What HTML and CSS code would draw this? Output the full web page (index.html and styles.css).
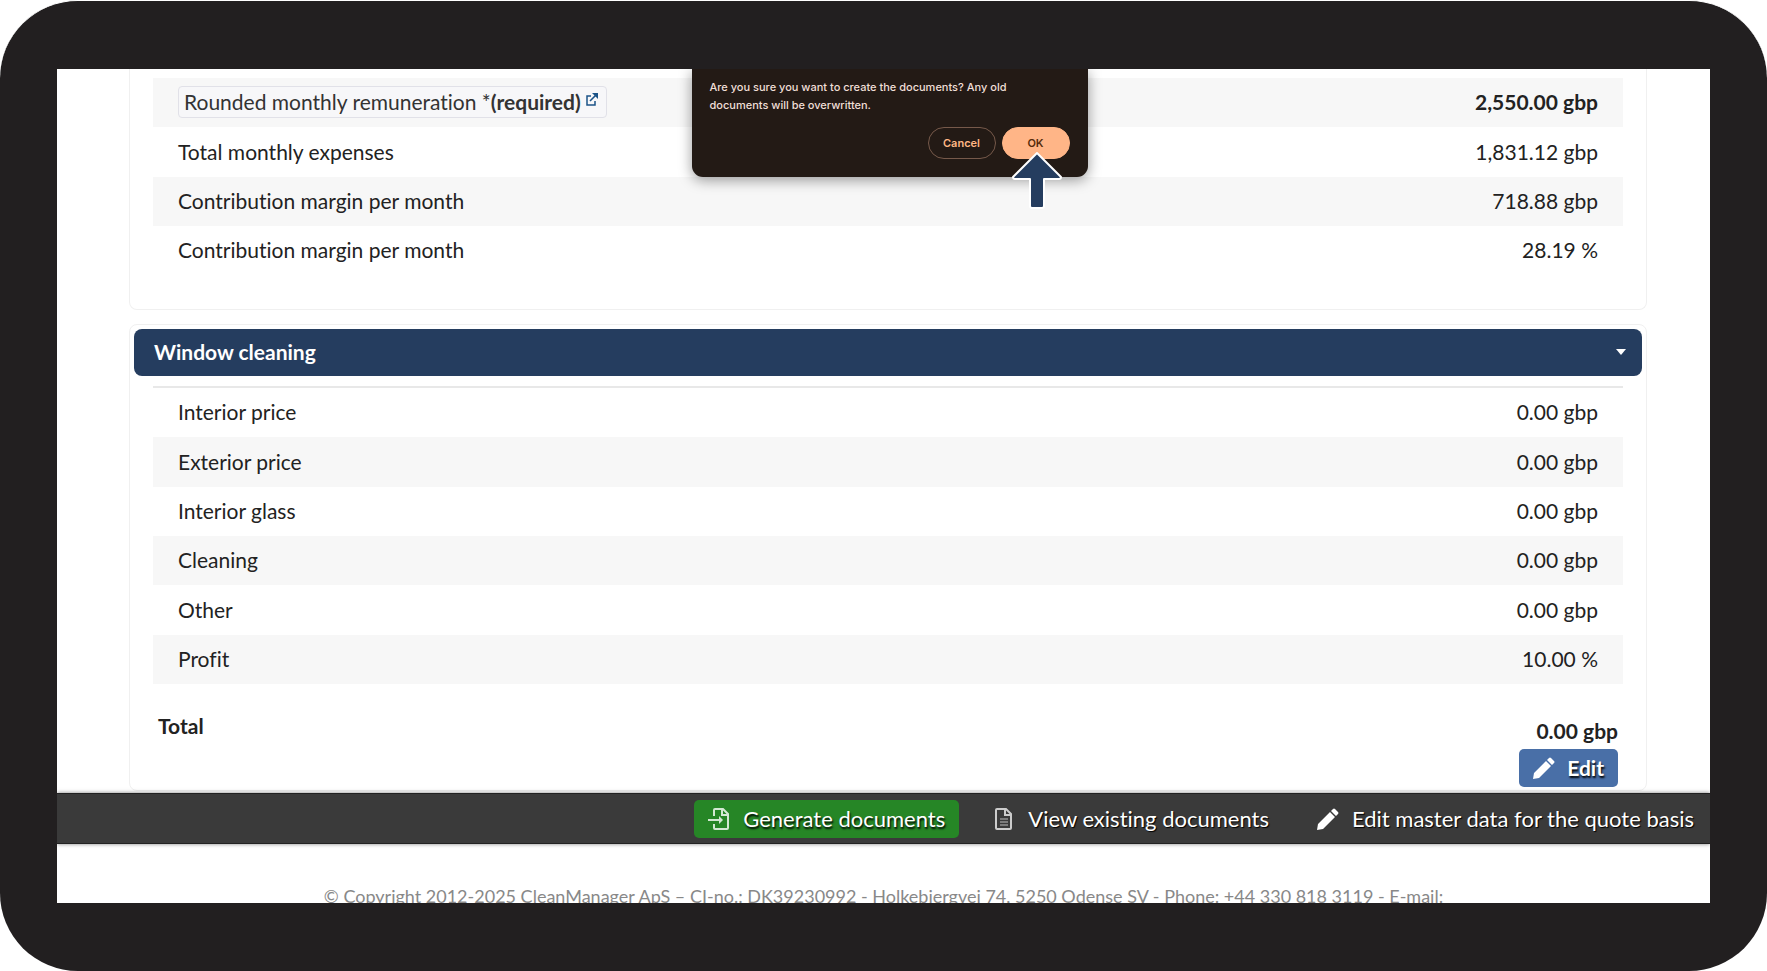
FILE: index.html
```html
<!DOCTYPE html>
<html lang="en">
<head>
    <meta charset="UTF-8">
    <meta name="viewport" content="width=device-width, initial-scale=1.0">
    <title>CleanManager - Quote basis</title>
    <link rel="stylesheet" href="styles.css">
</head>
<body>
    <div class="device">
        <div class="screen">
            <main class="content">
                <section class="panel panel-monthly">
                    <table class="rows rows-monthly">
                        <tbody>
                            <tr>
                                <th scope="row">
                                    <a class="field-link" href="#">Rounded monthly remuneration *<strong>(required)</strong>
                                        <svg class="icon-external" viewBox="0 0 12 14" aria-hidden="true">
                                            <path d="M5 4H1v9h8V9" fill="none" stroke="currentColor" stroke-width="1.5"/>
                                            <path d="M4 9l6-6" fill="none" stroke="currentColor" stroke-width="1.6"/>
                                            <path d="M6 1h6v6z" fill="currentColor"/>
                                        </svg>
                                    </a>
                                </th>
                                <td><strong>2,550.00 gbp</strong></td>
                            </tr>
                            <tr><th scope="row">Total monthly expenses</th><td>1,831.12 gbp</td></tr>
                            <tr><th scope="row">Contribution margin per month</th><td>718.88 gbp</td></tr>
                            <tr><th scope="row">Contribution margin per month</th><td>28.19 %</td></tr>
                        </tbody>
                    </table>
                </section>

                <section class="panel">
                    <button type="button" class="panel-header">
                        Window cleaning
                        <span class="caret"></span>
                    </button>
                    <table class="rows rows-window">
                        <tbody>
                            <tr><th scope="row">Interior price</th><td>0.00 gbp</td></tr>
                            <tr><th scope="row">Exterior price</th><td>0.00 gbp</td></tr>
                            <tr><th scope="row">Interior glass</th><td>0.00 gbp</td></tr>
                            <tr><th scope="row">Cleaning</th><td>0.00 gbp</td></tr>
                            <tr><th scope="row">Other</th><td>0.00 gbp</td></tr>
                            <tr><th scope="row">Profit</th><td>10.00 %</td></tr>
                        </tbody>
                    </table>
                    <div class="total">
                        <strong class="total-label">Total</strong>
                        <div class="total-value">
                            <strong>0.00 gbp</strong>
                            <button type="button" class="btn btn-edit">
                                <svg class="icon" viewBox="0 0 22 22" aria-hidden="true">
                                    <path d="M0 22l1-6L13 4l5 5L6 21zM14 3l2-2q1-1 2 0l3 3q1 1 0 2l-2 2z" fill="#fff"/>
                                </svg>
                                Edit
                            </button>
                        </div>
                    </div>
                </section>
            </main>

            <nav class="toolbar">
                <button type="button" class="btn btn-generate">
                    <svg class="icon" viewBox="0 0 22 22" aria-hidden="true">
                        <path d="M6 8V2q0-1 1-1h8l5 5v14q0 1-1 1H7q-1 0-1-1v-4M14 1v6h6" fill="none" stroke="#d3e8d3" stroke-width="2"/>
                        <path d="M0 12h12" stroke="#d3e8d3" stroke-width="2"/>
                        <path d="M11 8l4 4-4 4z" fill="#d3e8d3"/>
                    </svg>
                    Generate documents
                </button>
                <button type="button" class="btn">
                    <svg class="icon" viewBox="0 0 22 22" aria-hidden="true">
                        <path d="M4 1h9l5 5v14q0 1-1 1H4q-1 0-1-1V2q0-1 1-1zM12 1v6h6" fill="none" stroke="#ccc" stroke-width="2"/>
                        <path d="M7 11h8M7 14h8M7 17h8" stroke="#bbb" stroke-width="1.2"/>
                    </svg>
                    View existing documents
                </button>
                <button type="button" class="btn">
                    <svg class="icon" viewBox="0 0 22 22" aria-hidden="true">
                        <path d="M0 22l1-6L13 4l5 5L6 21zM14 3l2-2q1-1 2 0l3 3q1 1 0 2l-2 2z" fill="#fff"/>
                    </svg>
                    Edit master data for the quote basis
                </button>
            </nav>

            <footer class="footer">© Copyright 2012-2025 CleanManager ApS – CI-no.: DK39230992 - Holkebjergvej 74, 5250 Odense SV - Phone: +44 330 818 3119 - E-mail:</footer>

            <div class="dialog" role="alertdialog" aria-describedby="dialogText">
                <p id="dialogText">Are you sure you want to create the documents? Any old documents will be overwritten.</p>
                <div class="dialog-actions">
                    <button type="button" class="dialog-btn">Cancel</button>
                    <button type="button" class="dialog-btn dialog-btn-ok">OK</button>
                </div>
                <svg class="pointer" viewBox="0 0 52 58" aria-hidden="true">
                    <path d="M26 2L50 26Q50 28 48 28H33V55Q33 57 31 57H21Q19 57 19 55V28H4Q2 28 2 26Z" fill="#253d5f" stroke="#fff" stroke-width="2" stroke-linejoin="round"/>
                </svg>
            </div>
        </div>
    </div>
</body>
</html>
```

FILE: styles.css
```css
* {
    margin: 0;
    padding: 0;
    box-sizing: border-box;
}

body {
    font-family: Lato, "Open Sans", sans-serif;
    font-size: 21px;
    font-variant-ligatures: none;
    line-height: 28px;
    color: #222;
    background: #fff;
}

button {
    font: inherit;
    font-variant-ligatures: none;
    border: none;
    cursor: pointer;
}

/* Tablet frame */
.device {
    height: 100vh;
    padding: 68px 57px;
    background: #221f20;
    border-top: 1px solid #fff;
    border-radius: 78px;
}

.screen {
    position: relative;
    height: 100%;
    overflow: hidden;
    background: #fff;
}

.content {
    padding: 0 63px 0 72px;
}

/* Panels */
.panel {
    padding: 4px 4px 3px;
    margin-bottom: 2px;
    border: 1px solid #f0f0f0;
    border-radius: 8px;
}

.panel-monthly {
    padding-top: 9px;
    padding-bottom: 34px;
    margin-bottom: 14px;
    border-top: none;
    border-radius: 0 0 8px 8px;
}

.panel-header {
    display: flex;
    align-items: center;
    justify-content: space-between;
    width: 100%;
    height: 47px;
    padding: 0 16px 1px 20px;
    margin-bottom: 10px;
    color: #fff;
    font-weight: 700;
    background: #253d5f;
    border-radius: 8px;
}

.caret {
    border: 5px solid transparent;
    border-top: 6px solid #fff;
    border-bottom: none;
}

/* Price rows */
.rows {
    width: calc(100% - 38px);
    margin: 0 19px;
    border-spacing: 0;
}

.rows-window {
    border-top: 2px solid #e8e8e8;
}

.rows th,
.rows td {
    height: 49px;
    padding: 0 25px 1px;
    font-weight: 400;
    text-align: left;
}

.rows tr:nth-child(3n + 2) th {
    height: 50px;
}

.rows td {
    text-align: right;
}

.rows-monthly tr:nth-child(odd),
.rows-window tr:nth-child(even) {
    background: #f7f7f7;
}

.field-link {
    display: inline-block;
    padding: 1px 8px 1px 5px;
    color: #333;
    text-decoration: none;
    background: #f7f7f9;
    border: 1px solid #e1e1e8;
    border-radius: 4px;
    vertical-align: middle;
}

.icon-external {
    width: 12px;
    height: 14px;
    color: #1c5488;
    vertical-align: 4px;
}

.total {
    display: flex;
    justify-content: space-between;
    padding: 28px 24px 0;
}

.total-value {
    display: flex;
    flex-direction: column;
    align-items: flex-end;
    gap: 4px;
    padding-top: 5px;
}

/* Buttons */
.btn {
    display: flex;
    align-items: center;
    gap: 13px;
    height: 38px;
    padding: 0 14px;
    color: #fff;
    font-size: 22px;
    text-shadow: 1px 1px 1px #000;
    background: none;
    border-radius: 5px;
}

.btn-edit {
    gap: 12px;
    font-size: 21px;
    font-weight: 700;
    text-shadow: 1px 2px 2px #000;
    background: #496fa7;
}

.btn-generate {
    text-shadow: 1px 2px 2px #000;
    background: #268626;
}

.icon {
    width: 22px;
    height: 22px;
}

.toolbar {
    position: relative;
    display: flex;
    align-items: center;
    justify-content: flex-end;
    gap: 20px;
    height: 51px;
    padding-right: 2px;
    background: #3a3a3a;
    border-top: 1px solid #222;
    border-bottom: 1px solid #222;
    box-shadow: 0 0 4px rgba(0, 0, 0, 0.5);
}

.footer {
    display: flex;
    justify-content: center;
    padding-top: 38px;
    font-size: 18px;
    color: #888;
    white-space: nowrap;
}

/* Confirm dialog */
.dialog {
    position: absolute;
    top: 0;
    left: 50%;
    width: 396px;
    height: 108px;
    margin-left: -192px;
    padding: 9px 18px 18px;
    font-family: Inter, sans-serif;
    font-size: 11px;
    font-weight: 500;
    line-height: 18px;
    color: #f0dfd7;
    background: #231a15;
    border-radius: 0 0 11px 11px;
    box-shadow: 0 3px 14px rgba(0, 0, 0, 0.4);
}

.dialog p {
    width: 320px;
}

.dialog-actions {
    display: flex;
    justify-content: flex-end;
    gap: 6px;
    margin-top: 13px;
}

.dialog-btn {
    width: 68px;
    height: 32px;
    color: #ffb785;
    font-weight: 600;
    background: none;
    border: 1px solid #76594a;
    border-radius: 16px;
}

.dialog-btn-ok {
    color: #552c0c;
    background: #ffb587;
    border-color: #ffb587;
}

.pointer {
    position: absolute;
    top: 82px;
    right: 25px;
    width: 52px;
    height: 58px;
}
```
